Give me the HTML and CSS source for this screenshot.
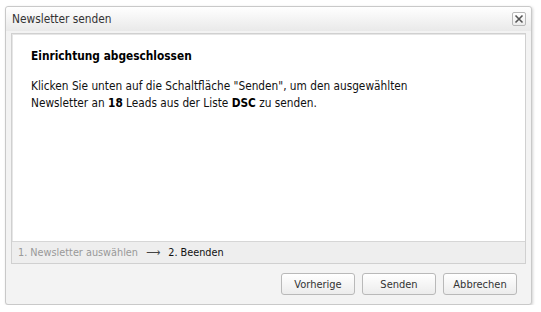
FILE: index.html
```html
<!DOCTYPE html>
<html lang="de">
<head>
<meta charset="utf-8">
<title>Newsletter senden</title>
<link rel="stylesheet" href="styles.css">
</head>
<body>
<div class="dialog">
  <div class="titlebar">
    <span class="title">Newsletter senden</span>
    <button class="close" aria-label="Schließen">
      <svg width="10" height="10" viewBox="0 0 10 10"><path d="M1.5 1.5 L8.5 8.5 M8.5 1.5 L1.5 8.5" stroke="#555" stroke-width="1.6" fill="none"/></svg>
    </button>
  </div>
  <div class="main">
    <div class="panel">
      <div class="content">
        <h2 class="heading">Einrichtung abgeschlossen</h2>
        <p class="text">Klicken Sie unten auf die Schaltfläche "Senden", um den ausgewählten<br>Newsletter an <b>18</b> Leads aus der Liste <b>DSC</b> zu senden.</p>
      </div>
      <div class="steps">
        <span class="step done">1. Newsletter auswählen</span>
        <span class="arrow">&#10230;</span>
        <span class="step current">2. Beenden</span>
      </div>
    </div>
  </div>
  <div class="footer">
    <button class="btn">Vorherige</button>
    <button class="btn">Senden</button>
    <button class="btn">Abbrechen</button>
  </div>
</div>
</body>
</html>
```
FILE: styles.css
```css
* { box-sizing: border-box; }
html, body { margin: 0; padding: 0; background: #fff; }
body {
  font-family: "DejaVu Sans Condensed", "DejaVu Sans", sans-serif;
  font-size: 11.75px;
  color: #111;
}
.dialog {
  margin: 6px 0 0 5px;
  width: 527px;
  height: 299px;
  border: 1px solid #c9c9c9;
  border-radius: 3px;
  background: #f3f3f3;
  box-shadow: 1px 1px 3px rgba(0,0,0,0.18);
  display: flex;
  flex-direction: column;
}
.titlebar {
  height: 24px;
  display: flex;
  align-items: center;
  justify-content: space-between;
  padding: 0 5px 0 6px;
  background: linear-gradient(#ffffff, #e9e9e9);
  border-radius: 3px 3px 0 0;
}
.title { color: #333; font-size: 11.8px; }
.close {
  width: 14px; height: 14px;
  padding: 0;
  border: 1px solid #b8b8b8;
  border-radius: 2px;
  background: linear-gradient(#fff, #ececec);
  display: flex; align-items: center; justify-content: center;
}
.main { padding: 2px 5px 0 5px; }
.panel {
  border: 1px solid #d0d0d0;
  box-shadow: inset 1px 1px 0 #e6e6e6;
  background: #fff;
  height: 231px;
  display: flex;
  flex-direction: column;
}
.content { flex: 1; padding: 15px 19px 0 19px; }
.heading { margin: 0 0 15px 0; font-size: 11.8px; font-weight: bold; color: #000; }
.text { margin: 0; line-height: 17px; color: #111; }
.text b { color: #000; }
.steps {
  height: 22px;
  border-top: 1px solid #d6d6d6;
  background: #eeeeee;
  display: flex;
  align-items: center;
  gap: 8px;
  padding-left: 6px;
  font-size: 10.8px;
}
.step.done { color: #999; }
.arrow { color: #444; font-size: 11px; }
.step.current { color: #111; }
.footer {
  flex: 1;
  display: flex;
  justify-content: flex-end;
  align-items: center;
  gap: 7px;
  padding: 0 14px 0 0;
}
.btn {
  font-family: inherit;
  font-size: 11px;
  color: #333;
  width: 74px;
  height: 22px;
  padding: 0;
  border: 1px solid #b9b9b9;
  border-radius: 3px;
  background: linear-gradient(#ffffff, #ececec);
}
```
